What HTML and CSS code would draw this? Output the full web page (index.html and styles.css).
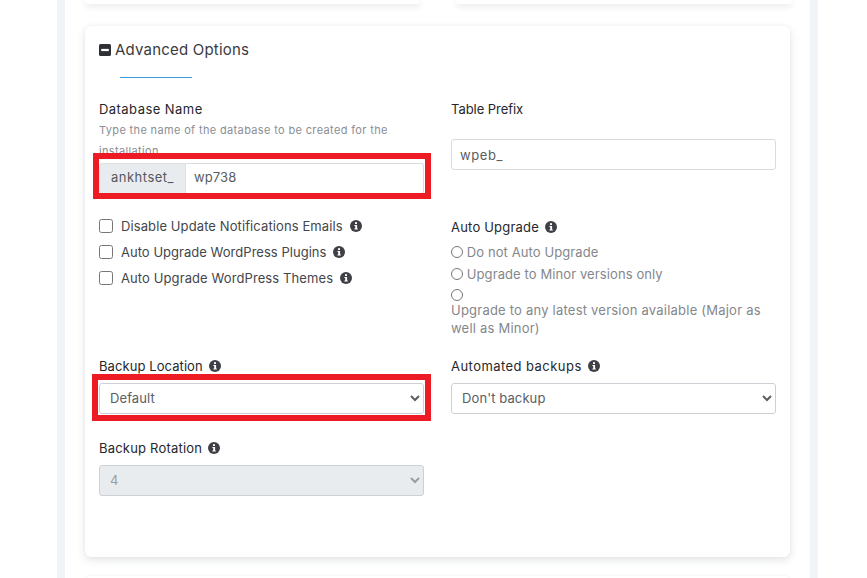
FILE: index.html
```html
<!DOCTYPE html>
<html lang="en">
<head>
<meta charset="utf-8">
<title>Advanced Options</title>
<link rel="stylesheet" href="styles.css">
</head>
<body>
<div class="frame">
  <div class="top-row">
    <div class="top-card"></div>
    <div class="top-card top-card-right"></div>
  </div>
  <section class="card">
    <h2 class="heading">
      <svg class="minus" viewBox="0 0 12 12" aria-hidden="true"><rect width="12" height="12" rx="1.6" fill="#2f3036"/><rect x="2.2" y="4.9" width="7.6" height="2.2" fill="#fff"/></svg>
      <span class="heading-text">Advanced Options</span>
    </h2>
    <div class="rule"></div>

    <div class="row row-db">
      <div class="field">
        <label class="label label-wide">Database Name</label>
        <p class="help">Type the name of the database to be created for the installation</p>
        <div class="group">
          <span class="addon">ankhtset_</span>
          <input class="control group-input" type="text" value="wp738">
        </div>
      </div>
      <div class="field">
        <label class="label label-tight">Table Prefix</label>
        <input class="control prefix" type="text" value="wpeb_">
      </div>
    </div>

    <div class="row row-opts">
      <div class="field checks">
        <label class="check"><input type="checkbox"><span>Disable Update Notifications Emails</span><svg class="info" viewBox="0 0 12 12"><use href="#i"/></svg></label>
        <label class="check"><input type="checkbox"><span class="check-snug">Auto Upgrade WordPress Plugins</span><svg class="info" viewBox="0 0 12 12"><use href="#i"/></svg></label>
        <label class="check"><input type="checkbox"><span>Auto Upgrade WordPress Themes</span><svg class="info" viewBox="0 0 12 12"><use href="#i"/></svg></label>
      </div>
      <div class="field upgrade">
        <label class="label label-info">Auto Upgrade <svg class="info" viewBox="0 0 12 12"><use href="#i"/></svg></label>
        <label class="radio r1"><input type="radio" name="u"> Do not Auto Upgrade</label>
        <label class="radio r2"><input type="radio" name="u"> Upgrade to Minor versions only</label>
        <label class="radio r3"><input type="radio" name="u">Upgrade to any latest version available (Major as well as Minor)</label>
      </div>
    </div>

    <div class="row row-backup">
      <div class="field">
        <label class="label label-info label-snug">Backup Location <svg class="info" viewBox="0 0 12 12"><use href="#i"/></svg></label>
        <select class="control select"><option>Default</option></select>
      </div>
      <div class="field">
        <label class="label label-info label-wide">Automated backups <svg class="info" viewBox="0 0 12 12"><use href="#i"/></svg></label>
        <select class="control select"><option>Don't backup</option></select>
      </div>
    </div>

    <div class="row row-rotation">
      <div class="field">
        <label class="label label-info">Backup Rotation <svg class="info" viewBox="0 0 12 12"><use href="#i"/></svg></label>
        <select class="control select" disabled><option>4</option></select>
      </div>
    </div>
  </section>
  <div class="next-card"></div>
  <div class="mark mark-db"></div>
  <div class="mark mark-backup"></div>
</div>
<svg class="defs" width="0" height="0" aria-hidden="true">
  <symbol id="i" viewBox="0 0 12 12">
    <circle cx="6" cy="6" r="6" fill="#3f4045"/>
    <rect x="5" y="2.2" width="2" height="1.8" fill="#fff"/>
    <path d="M4.4 5h2.7v3.6h.7v1H4.4v-1h.8V6h-.8z" fill="#fff"/>
  </symbol>
</svg>
</body>
</html>
```
FILE: styles.css
```css
* { box-sizing: border-box; }
html, body { margin: 0; height: 578px; overflow: hidden; background: #fff; }
body { font-family: Inter, "Noto Sans", sans-serif; font-size: 13px; letter-spacing: .1px; color: #212529; }
.frame {
  position: relative;
  width: 761px;
  height: 578px;
  margin-left: 57px;
  padding: 0 20px;
  border-left: 8px solid #f0f4f9;
  border-right: 8px solid #f0f4f9;
  overflow: hidden;
}
.top-row { display: flex; gap: 36px; height: 4px; width: 707px; }
.top-card { width: 335px; height: 4px; background: #fff; border-radius: 0 0 6px 6px; box-shadow: 0 2px 6px rgba(60, 70, 90, .16); }
.top-card-right { width: 336px; }
.card {
  height: 531px;
  margin-top: 22px;
  padding: 14px 14px 0;
  background: #fff;
  border-radius: 6px;
  box-shadow: 0 3px 8px rgba(60, 70, 90, .14), 0 0 3px rgba(60, 70, 90, .06);
}
.heading { display: flex; align-items: center; gap: 4px; height: 20px; margin: 0; font-size: 15px; font-weight: 400; color: #3a3b40; letter-spacing: .2px; }
.heading-text { margin-bottom: 2px; }
.minus { width: 12px; height: 12px; flex: none; }
.rule { width: 72px; height: 1px; margin: 17px 0 0 21px; background: #3f9be0; }
.row { display: grid; grid-template-columns: 325px 325px; column-gap: 27px; }
.row-db { margin-top: 22px; height: 117px; }
.row-opts { height: 140px; }
.row-backup { height: 82px; }
.label { display: block; height: 18px; line-height: 18px; font-size: 13px; letter-spacing: .2px; color: #26272b; }
.label-wide { letter-spacing: .45px; }
.label-tight { letter-spacing: -.05px; }
.label-snug { letter-spacing: .08px; }
.label-info { display: flex; align-items: center; gap: 6px; }
.help { height: 43px; margin: 2px 0 0; font-size: 11px; line-height: 21px; letter-spacing: .35px; color: #8b8e94; }
.group { display: flex; height: 31px; }
.addon { display: flex; align-items: center; width: 87px; padding: 0 0 3px 11px; font-size: 13px; letter-spacing: .5px; background: #e9ecef; border: 1px solid #dcdfe3; border-radius: 3px 0 0 3px; color: #55585c; }
.control { display: block; width: 100%; height: 31px; padding: 0 8px; font-family: inherit; font-size: 13px; letter-spacing: .1px; color: #5a5d62; background: #fff; border: 1px solid #d8dbdf; border-radius: 3px; outline: 0; }
.group-input { flex: 1; min-width: 0; padding-bottom: 3px; border-left: 0; border-radius: 0 3px 3px 0; }
.prefix { margin-top: 21px; letter-spacing: .6px; }
.select { margin-top: 8px; padding-left: 6px; padding-bottom: 1px; border-color: #cdd1d6; }
.select:disabled { background: #e9ecef; color: #9a9da2; opacity: 1; }
.check { display: flex; align-items: center; height: 18px; margin-bottom: 8px; color: #44464b; }
.check input { width: 14px; height: 14px; margin: 0 8px 0 0; flex: none; }
.check span { margin-right: 7px; }
.check .check-snug { letter-spacing: .03px; }
.info { width: 12px; height: 12px; flex: none; }
.upgrade { padding-top: 1px; }
.radio { display: block; line-height: 18px; color: #84878c; }
.radio input { width: 12px; height: 12px; margin: 0; vertical-align: -1px; }
.r1 { margin-top: 7px; }
.r2 { margin-top: 4px; }
.r3 { margin-top: 6px; letter-spacing: .22px; }
.r3 input { display: block; }
.next-card { height: 10px; margin-top: 19px; background: #fff; box-shadow: 0 0 3px rgba(60, 70, 90, .1); border-radius: 6px 6px 0 0; }
.mark { position: absolute; border: 6px solid #ed1c24; pointer-events: none; }
.mark-db { left: 28px; top: 153px; width: 338px; height: 46px; }
.mark-backup { left: 27px; top: 374px; width: 339px; height: 47px; }
.defs { position: absolute; }
```
